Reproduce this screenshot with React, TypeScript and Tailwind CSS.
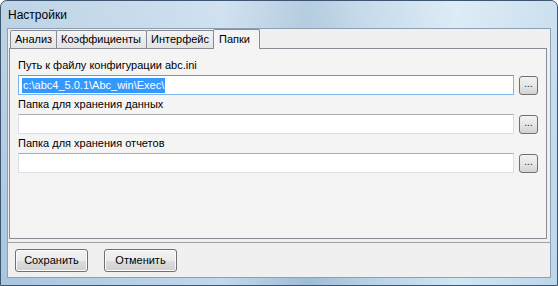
const font = { fontFamily: '"Liberation Sans", Arial, sans-serif' };

function TextField({ value, focused }: { value?: string; focused?: boolean }) {
  return (
    <div className="flex items-start">
      <div
        className={`w-[496px] h-[20px] bg-white border flex items-center pl-[3px] ${
          focused
            ? 'border-[#7eb4ea] border-t-[#569de5]'
            : 'border-[#dbdfe6] border-t-[#abadb3]'
        }`}
      >
        {value && (
          <span className="bg-[#3399ff] text-white text-[11px] leading-[15px] px-[1px]">{value}</span>
        )}
      </div>
      <button className="ml-[5px] mt-[1px] w-[19px] h-[19px] rounded-[3px] border border-[#707070] bg-gradient-to-b from-[#f2f2f2] via-[#e6e6e6] to-[#d2d2d2] flex items-center justify-center text-[10px] leading-none text-[#222] pb-[3px]">
        ...
      </button>
    </div>
  );
}

function Field({ label, value, focused }: { label: string; value?: string; focused?: boolean }) {
  return (
    <div className="flex flex-col">
      <div className="text-[11px] leading-[13px] mb-[3px] text-black">{label}</div>
      <TextField value={value} focused={focused} />
    </div>
  );
}

export default function App() {
  const tabs = [
    { name: 'Анализ', w: 'w-[47px]' },
    { name: 'Коэффициенты', w: 'w-[91px]' },
    { name: 'Интерфейс', w: 'w-[68px]' },
  ];

  return (
    <div
      className="w-[558px] h-[286px] relative overflow-hidden rounded-t-[7px] border border-[#3c5570] bg-[linear-gradient(90deg,#a9c6de_0%,#b8d1e7_25%,#c2d8ec_40%,#9ebdd6_55%,#b4cfe4_65%,#d2e6f3_82%,#bcd6ea_100%)]"
      style={font}
    >
      <div className="absolute inset-0 bg-gradient-to-b from-white/25 to-transparent pointer-events-none" />

      {/* Title bar */}
      <div className="relative h-[27px] flex items-center pl-[7px] text-[12px] text-black">
        Настройки
      </div>

      {/* Client area */}
      <div className="relative ml-[6px] w-[544px] h-[250px] border border-[#8d9fb2] bg-[#f0f0f0] flex flex-col">
        {/* Tabs */}
        <div className="h-[19px] flex items-end pl-[2px] relative z-10">
          {tabs.map((t, i) => (
            <div
              key={t.name}
              className={`${t.w} h-[18px] ${i > 0 ? '-ml-px' : ''} border border-b-0 border-[#898c95] rounded-t-[2px] bg-gradient-to-b from-[#f3f3f3] to-[#e3e3e3] text-[11px] leading-[16px] pl-[4px] text-black`}
            >
              {t.name}
            </div>
          ))}
          <div className="w-[47px] h-[20px] -ml-px mb-[-1px] border border-b-0 border-[#898c95] rounded-t-[2px] bg-[#f4f4f4] text-[11px] leading-[18px] pl-[5px] text-black">
            Папки
          </div>
        </div>

        {/* Tab panel */}
        <div className="ml-px w-[538px] h-[191px] border border-[#898c95] bg-[#f4f4f4] pt-[10px] pl-[8px] flex flex-col gap-[3px]">
          <Field label="Путь к файлу конфигурации abc.ini" value="c:\abc4_5.0.1\Abc_win\Exec\" focused />
          <Field label="Папка для хранения данных" />
          <Field label="Папка для хранения отчетов" />
        </div>

        {/* Bottom bar */}
        <div className="mt-[3px] flex-1 border-t border-[#a0a0a0] flex items-start gap-[16px] pl-[7px] pt-[6px]">
          {['Сохранить', 'Отменить'].map((b) => (
            <button
              key={b}
              className="w-[73px] h-[23px] rounded-[3px] border border-[#707070] bg-[linear-gradient(180deg,#f2f2f2_0%,#ebebeb_50%,#dddddd_51%,#cfcfcf_100%)] text-[11px] text-black shadow-[inset_0_0_0_1px_#fcfcfc]"
            >
              {b}
            </button>
          ))}
        </div>
      </div>
    </div>
  );
}
